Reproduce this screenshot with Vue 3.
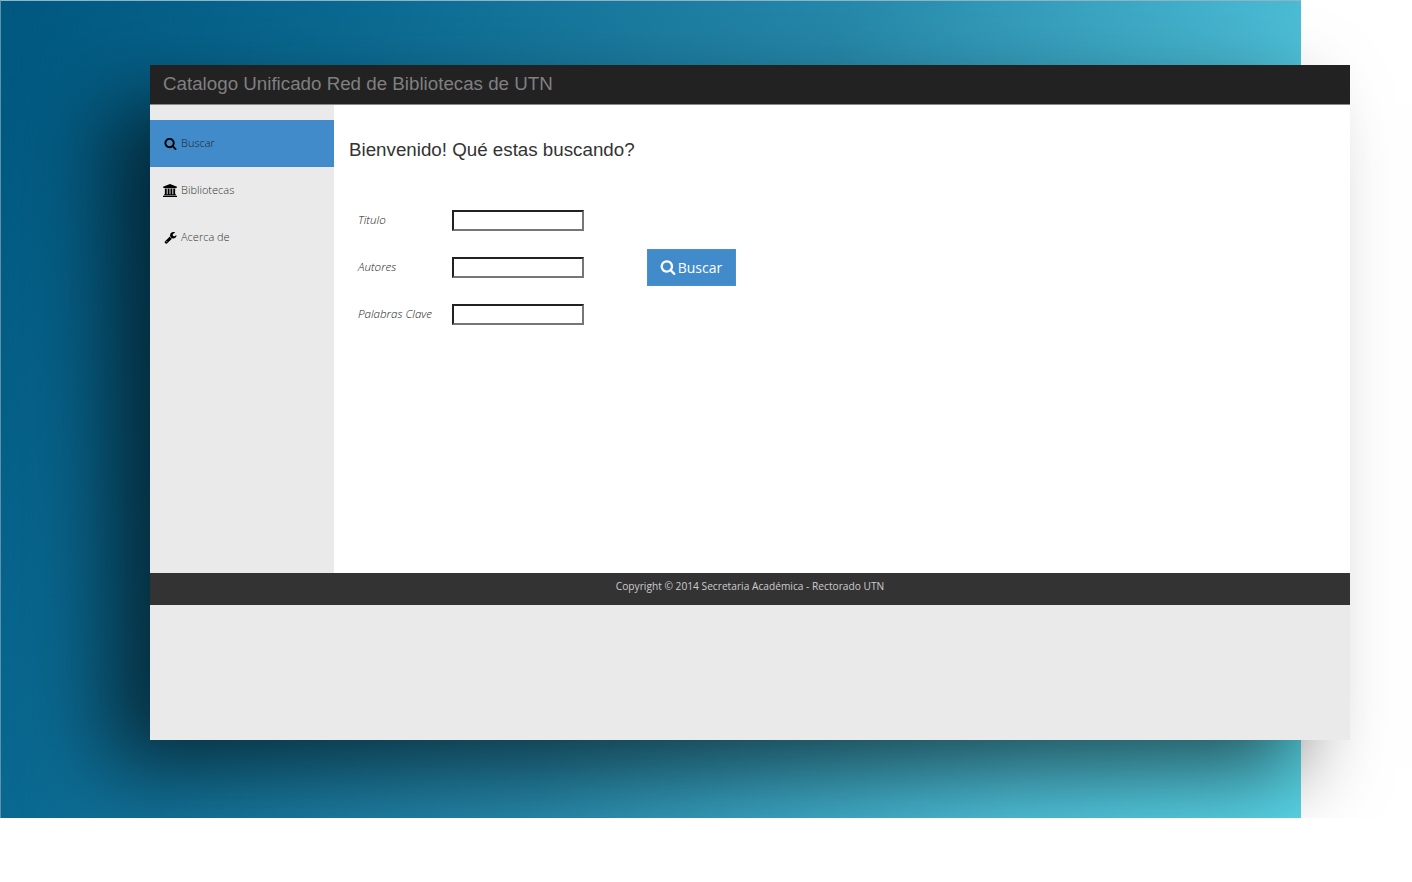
<script setup>
const search = "M1216 832q0-185-131.500-316.500t-316.500-131.500-316.500 131.500-131.500 316.500 131.500 316.500 316.500 131.500 316.500-131.500 131.500-316.500zm512 832q0 52-38 90t-90 38q-54 0-90-38l-343-342q-179 124-399 124-143 0-273.500-55.500t-225-150-150-225-55.500-273.500 55.500-273.500 150-225 225-150 273.500-55.500 273.500 55.500 225 150 150 225 55.500 273.500q0 220-124 399l343 343q37 37 37 90z"
const bank = "M960 0l960 384v128h-128q0 26-20.500 45t-48.500 19h-1526q-28 0-48.500-19t-20.500-45h-128v-128zm-704 640h256v768h128v-768h256v768h128v-768h256v768h128v-768h256v768h59q28 0 48.500 19t20.500 45v64h-1664v-64q0-26 20.500-45t48.500-19h59v-768zm1595 960q28 0 48.500 19t20.500 45v128h-1920v-128q0-26 20.500-45t48.500-19h1782z"
const wrench = "M448 1472q0-26-19-45t-45-19-45 19-19 45 19 45 45 19 45-19 19-45zm644-420l-682 682q-37 37-90 37-52 0-91-37l-106-108q-38-36-38-90 0-53 38-91l681-681q39 98 114.500 173.500t173.500 114.500zm634-435q0 39-23 106-47 134-164.500 217.500t-258.500 83.500q-185 0-316.500-131.500t-131.500-316.500 131.500-316.500 316.500-131.500q58 0 121.500 16.500t107.500 46.500q16 11 16 28t-16 28l-293 169v224l193 107q5-3 79-48.500t135.500-81 70.500-35.500q15 0 23.500 10t8.500 25z"
const menu = [
  { label: 'Buscar', d: search, box: '0 0 1792 1792', cls: 'small', active: true },
  { label: 'Bibliotecas', d: bank, box: '0 0 1920 1920', cls: '', active: false },
  { label: 'Acerca de', d: wrench, box: '0 0 1792 1792', cls: 'small', active: false }
]
const fields = ['Titulo', 'Autores', 'Palabras Clave']
</script>

<template>
  <div class="stage">
    <div class="window">
      <header class="topbar">Catalogo Unificado Red de Bibliotecas de UTN</header>
      <div class="body">
        <nav class="side">
          <a v-for="m in menu" :key="m.label" class="item" :class="{ active: m.active }">
            <span class="slot"><svg class="ico" :class="m.cls" :viewBox="m.box" aria-hidden="true"><path :d="m.d" /></svg></span>
            <span class="txt">{{ m.label }}</span>
          </a>
        </nav>
        <main class="main">
          <h1 class="title">Bienvenido! Qué estas buscando?</h1>
          <div class="search">
            <div class="fields">
              <label v-for="f in fields" :key="f" class="field">
                <span class="lab">{{ f }}</span>
                <input type="text" class="inp" />
              </label>
            </div>
            <button class="btn" type="button">
              <svg class="btn-ico" viewBox="0 0 1792 1792" aria-hidden="true"><path :d="search" /></svg>
              Buscar
            </button>
          </div>
        </main>
      </div>
      <footer class="foot">Copyright © 2014 Secretaria Académica - Rectorado UTN</footer>
      <div class="rest"></div>
    </div>
  </div>
</template>

<style scoped>
.stage {
  width: 1301px;
  height: 818px;
  box-sizing: border-box;
  padding: 64px 0 0 149px;
  background: linear-gradient(112deg, #00577f 0%, #0b6a92 22%, #2688aa 52%, #4ec0d8 82%, #58d4e5 100%);
  border-left: 1px solid #5b93ad;
  border-top: 1px solid #8fb4c4;
}
.window {
  width: 1200px;
  height: 675px;
  display: flex;
  flex-direction: column;
  background: #eaeaea;
  box-shadow: -48px 34px 80px -5px rgba(0, 0, 0, 0.62);
}
.topbar {
  height: 39px;
  flex: none;
  background: #222;
  border-bottom: 1px solid #8a8a8a;
  color: #808080;
  font: 18.75px/38px "Liberation Sans", Arial, sans-serif;
  padding-left: 13px;
}
.body {
  display: flex;
  height: 468px;
  flex: none;
}
.side {
  width: 184px;
  flex: none;
  background: #eaeaea;
  padding-top: 15px;
  box-sizing: border-box;
}
.item {
  height: 47px;
  display: flex;
  align-items: center;
  padding-left: 13px;
  gap: 4px;
  color: #333;
  font: 300 11px "Open Sans", sans-serif;
}
.item.active {
  background: #428bca;
  color: #222;
}
.txt {
  position: relative;
  top: -1px;
}
.slot {
  width: 14px;
  height: 14px;
  display: flex;
  align-items: center;
  justify-content: center;
  flex: none;
}
.ico {
  width: 14px;
  height: 14px;
  fill: #000;
  flex: none;
}
.ico.small {
  width: 13px;
  height: 13px;
}
.main {
  flex: 1;
  background: #fff;
  padding: 0 0 0 15px;
}
.title {
  margin: 33px 0 0;
  font: 400 18.75px/24px "Liberation Sans", Arial, sans-serif;
  color: #333;
}
.search {
  display: flex;
  align-items: center;
  margin-top: 48px;
}
.fields {
  display: flex;
  flex-direction: column;
  gap: 26px;
  padding-left: 9px;
}
.field {
  display: flex;
  align-items: center;
  height: 21px;
}
.lab {
  width: 94px;
  font: italic 300 11.6px/19px "Open Sans", sans-serif;
  color: #222;
  padding-bottom: 2px;
}
.inp {
  width: 132px;
  height: 21px;
  box-sizing: border-box;
  border: 2px inset #767676;
  background: #fff;
  padding: 0;
  margin: 0;
}
.btn {
  margin-left: 63px;
  width: 89px;
  height: 37px;
  border: 1px solid #4a90cc;
  background: #428bca;
  color: #fff;
  font: 14px "Open Sans", sans-serif;
  display: flex;
  align-items: center;
  justify-content: center;
  gap: 2px;
  padding: 0 1px 0 0;
}
.btn-ico {
  width: 16px;
  height: 16px;
  fill: #fff;
  position: relative;
  top: -1px;
}
.foot {
  height: 32px;
  flex: none;
  background: #333;
  color: #ccc;
  font: 10.2px/27px "Open Sans", sans-serif;
  text-align: center;
}
.rest {
  flex: 1;
  background: #eaeaea;
}
</style>

<style>
html, body { background: #fff; overflow: hidden; }
</style>
